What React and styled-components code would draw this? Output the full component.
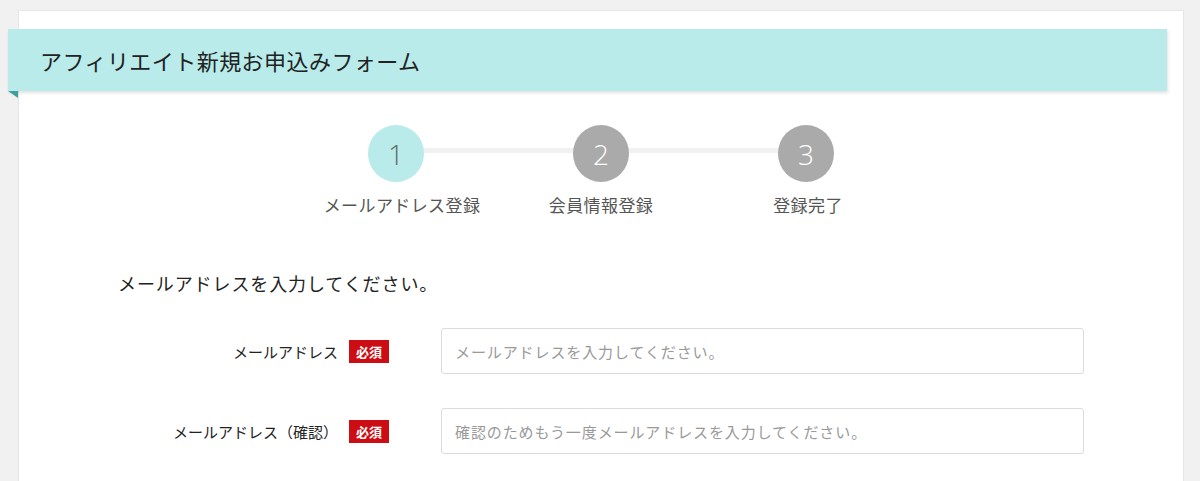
import React from "react";
import styled, { createGlobalStyle } from "styled-components";

const Global = createGlobalStyle`
  html, body { margin: 0; padding: 0; background: #f1f1f1; }
  body {
    font-family: "Noto Sans CJK JP", "Noto Sans", sans-serif;
    color: #222;
  }
  * { box-sizing: border-box; }
`;

const Page = styled.div`
  padding: 10px 16px 0 18px;
`;

const Card = styled.div`
  background: #fff;
  border: 1px solid #e6e6e6;
  border-bottom: none;
  min-height: 480px;
  padding-top: 18px;
`;

const Header = styled.div`
  position: relative;
  margin: 0 16px 0 -11px;
  height: 62px;
  background: #b8ebe9;
  display: flex;
  align-items: center;
  padding-left: 32px;
  box-shadow: 1px 2px 3px rgba(0, 0, 0, 0.12);
  &::after {
    content: "";
    position: absolute;
    left: 0;
    bottom: -7px;
    border-top: 7px solid #3f9f9c;
    border-left: 10px solid transparent;
  }
`;

const Title = styled.h1`
  margin: 0;
  font-size: 22px;
  font-weight: 400;
  color: #222;
  letter-spacing: 0.45px;
`;

const Steps = styled.ol`
  list-style: none;
  margin: 34px 0 0;
  padding: 0;
  display: flex;
  justify-content: center;
`;

const Step = styled.li`
  position: relative;
  width: 205px;
  display: flex;
  flex-direction: column;
  align-items: center;
  &:not(:last-child)::after {
    content: "";
    position: absolute;
    top: 23px;
    left: 50%;
    width: 205px;
    height: 5px;
    background: #f1f1f1;
    z-index: 0;
  }
`;

const Circle = styled.div`
  position: relative;
  z-index: 1;
  width: 56px;
  height: 57px;
  border-radius: 50%;
  background: ${(p) => (p.$active ? "#b8ebe9" : "#aaaaaa")};
  color: ${(p) => (p.$active ? "#666" : "#fff")};
  display: flex;
  align-items: center;
  justify-content: center;
  font-family: "Open Sans", "Noto Sans", sans-serif;
  font-size: 28px;
  font-weight: 300;
`;

const StepLabel = styled.div`
  margin-top: 10px;
  font-size: 17px;
  line-height: 26px;
  letter-spacing: 0.4px;
  color: #555;
  white-space: nowrap;
  padding-left: ${(p) => p.$shift || 0}px;
`;

const Form = styled.div`
  padding: 0 99px;
  margin-top: 52px;
`;

const Intro = styled.p`
  margin: 0 0 31px;
  font-size: 18px;
  line-height: 27px;
  letter-spacing: 0.9px;
  color: #222;
`;

const Row = styled.div`
  display: grid;
  grid-template-columns: 271px 1fr;
  column-gap: 52px;
  align-items: center;
  margin-bottom: 34px;
`;

const LabelCell = styled.div`
  display: flex;
  justify-content: flex-end;
  align-items: center;
  gap: 11px;
`;

const Label = styled.label`
  font-size: 15px;
  color: #222;
  white-space: nowrap;
`;

const Badge = styled.span`
  display: inline-flex;
  align-items: center;
  justify-content: center;
  width: 40px;
  height: 23px;
  background: #cc0e14;
  color: #fff;
  font-size: 13px;
  font-weight: 700;
`;

const Input = styled.input`
  width: 100%;
  height: 46px;
  border: 1px solid #dcdcdc;
  border-radius: 3px;
  padding: 0 13px;
  font-family: "Noto Sans CJK JP", sans-serif;
  font-size: 15px;
  letter-spacing: 0.9px;
  color: #222;
  background: #fff;
  outline: none;
  &::placeholder { color: #999; }
`;

const steps = [
  { n: 1, label: "メールアドレス登録", active: true, shift: 12 },
  { n: 2, label: "会員情報登録" },
  { n: 3, label: "登録完了", shift: 4 },
];

export default function App() {
  return (
    <>
      <Global />
      <Page>
        <Card>
          <Header>
            <Title>アフィリエイト新規お申込みフォーム</Title>
          </Header>
          <Steps>
            {steps.map((s) => (
              <Step key={s.n}>
                <Circle $active={s.active}>{s.n}</Circle>
                <StepLabel $shift={s.shift}>{s.label}</StepLabel>
              </Step>
            ))}
          </Steps>
          <Form>
            <Intro>メールアドレスを入力してください。</Intro>
            <Row>
              <LabelCell>
                <Label>メールアドレス</Label>
                <Badge>必須</Badge>
              </LabelCell>
              <Input type="email" placeholder="メールアドレスを入力してください。" />
            </Row>
            <Row>
              <LabelCell>
                <Label>メールアドレス（確認）</Label>
                <Badge>必須</Badge>
              </LabelCell>
              <Input type="email" placeholder="確認のためもう一度メールアドレスを入力してください。" />
            </Row>
          </Form>
        </Card>
      </Page>
    </>
  );
}
